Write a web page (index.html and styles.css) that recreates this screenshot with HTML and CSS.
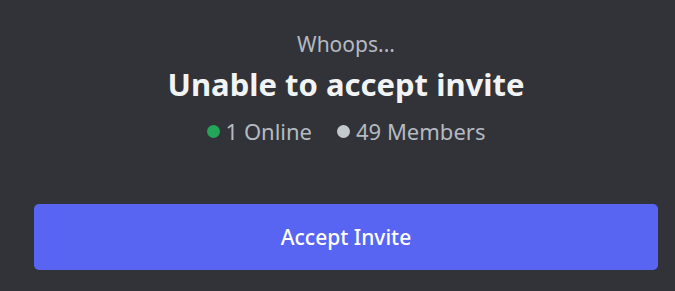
FILE: index.html
```html
<!DOCTYPE html>
<html>
<head>
<meta charset="utf-8">
<link rel="stylesheet" href="styles.css">
</head>
<body>
<div class="card">
  <div class="header">
    <div class="sub">Whoops...</div>
    <h1 class="title">Unable to accept invite</h1>
    <div class="stats">
      <span class="stat"><span class="dot online"></span>1 Online</span>
      <span class="stat"><span class="dot members"></span>49 Members</span>
    </div>
  </div>
  <button class="accept">Accept Invite</button>
</div>
</body>
</html>
```
FILE: styles.css
```css
html, body {
  margin: 0;
  padding: 0;
  background: #313338;
  width: 675px;
  height: 291px;
  overflow: hidden;
}
.card {
  display: flex;
  flex-direction: column;
  align-items: center;
  padding: 30px 17px 0 34px;
  font-family: "Noto Sans", sans-serif;
}
.header {
  display: flex;
  flex-direction: column;
  align-items: center;
}
.sub {
  color: #b5bac1;
  font-size: 21px;
  line-height: 28px;
}
.title {
  margin: 6px 0 0;
  color: #f2f3f5;
  font-size: 31px;
  line-height: 40px;
  font-weight: 700;
}
.stats {
  display: flex;
  gap: 25px;
  margin-top: 12px;
  color: #b5bac1;
  font-size: 22px;
  line-height: 30px;
}
.stat {
  display: flex;
  align-items: center;
  gap: 6px;
}
.dot {
  width: 13px;
  height: 13px;
  border-radius: 50%;
  display: inline-block;
}
.online { background: #23a55a; }
.members { background: #c4c9ce; }
.accept {
  margin-top: 58px;
  width: 624px;
  height: 66px;
  align-self: flex-start;
  border: none;
  border-radius: 5px;
  background: #5865f2;
  color: #ffffff;
  font-family: "Noto Sans", sans-serif;
  font-size: 21px;
  font-weight: 500;
}
```
